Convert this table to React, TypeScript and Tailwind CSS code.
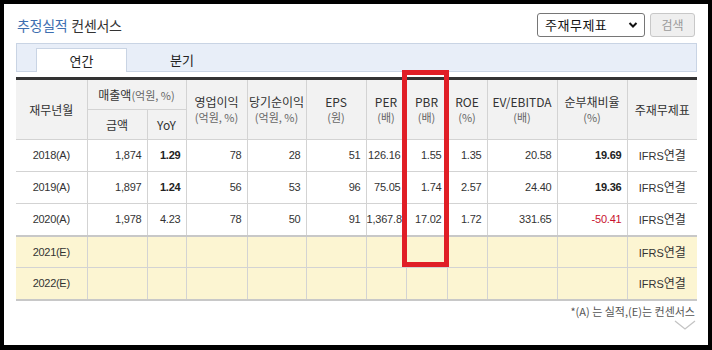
import React from "react";

const KR = { fontFamily: '"Noto Sans CJK KR", "Noto Sans", sans-serif' };
const NUM = { fontFamily: '"Liberation Sans", Arial, sans-serif' };

type Row = {
  y: string;
  vals: (string | null)[];
  est?: boolean;
};

const rows: Row[] = [
  { y: "2018(A)", vals: ["1,874", "1.29", "78", "28", "51", "126.16", "1.55", "1.35", "20.58", "19.69"] },
  { y: "2019(A)", vals: ["1,897", "1.24", "56", "53", "96", "75.05", "1.74", "2.57", "24.40", "19.36"] },
  { y: "2020(A)", vals: ["1,978", "4.23", "78", "50", "91", "1,367.8", "17.02", "1.72", "331.65", "-50.41"] },
  { y: "2021(E)", vals: [null, null, null, null, null, null, null, null, null, null], est: true },
  { y: "2022(E)", vals: [null, null, null, null, null, null, null, null, null, null], est: true },
];

const widths = [71, 60, 39, 61, 59, 60, 40, 41, 40, 70, 70, 70];

function Head2({ top, unit }: { top: string; unit: string }) {
  return (
    <th rowSpan={2} className="font-normal border-l border-b border-[#d3d3d3] leading-[15px] whitespace-nowrap text-[12px] text-[#333]">
      {top}
      <br />
      <span className="text-[11px] text-[#666]">{unit}</span>
    </th>
  );
}

export default function App() {
  return (
    <div className="relative w-[712px] h-[350px] bg-black pt-[4px] pl-[4px] pr-[4px] pb-[5px]">
      <div className="bg-white h-[341px] pl-[12px] pr-[11px] pt-[9px] text-[#333]" style={KR}>
        {/* title row */}
        <div className="flex items-center justify-between h-[24px]">
          <div className="text-[14px] leading-none pl-[1px] tracking-[-0.3px]">
            <span className="text-[#3d6eb0]">추정실적</span>
            <span className="text-[#333] ml-[4px]">컨센서스</span>
          </div>
          <div className="flex items-center gap-[5px] mr-[2px]">
            <div className="w-[108px] h-[24px] border border-[#767676] rounded-[3px] flex items-center justify-between pl-[7px] pr-[6px] text-[13px] text-[#111]">
              <span className="tracking-[0.5px]">주재무제표</span>
              <svg width="10" height="8" viewBox="0 0 10 8">
                <polyline points="1.5,2 5,5.5 8.5,2" fill="none" stroke="#111" strokeWidth="2" />
              </svg>
            </div>
            <div className="w-[45px] h-[24px] border border-[#c8c8c8] bg-[#efefef] rounded-[3px] flex items-center justify-center text-[12px] text-[#9a9a9a]">
              검색
            </div>
          </div>
        </div>
        {/* tabs */}
        <div className="mt-[6px] h-[29px] bg-[#e8eef8] border border-[#c9d4e4] pl-[19px] pt-[4px] flex">
          <div className="w-[91px] h-[24px] bg-white border border-b-0 border-[#c9d4e4] flex items-center justify-center text-[13px] text-[#222]">
            연간
          </div>
          <div className="w-[110px] h-[24px] flex items-center justify-center text-[13px] text-[#222]">
            분기
          </div>
        </div>
        {/* table */}
        <table className="mt-[5px] w-[681px] table-fixed border-collapse border-t-[3px] border-t-[#333]">
          <colgroup>
            {widths.map((w, i) => (
              <col key={i} style={{ width: w }} />
            ))}
          </colgroup>
          <thead>
            <tr className="h-[31px] bg-[#f2f2f2] text-[12px] font-normal">
              <th rowSpan={2} className="font-normal border-b border-[#d3d3d3] text-[#333]">재무년월</th>
              <th colSpan={2} className="font-normal border-l border-b border-[#d3d3d3] whitespace-nowrap text-[#333]">
                매출액<span className="text-[11px] text-[#666]">(억원, %)</span>
              </th>
              <Head2 top="영업이익" unit="(억원, %)" />
              <Head2 top="당기순이익" unit="(억원, %)" />
              <Head2 top="EPS" unit="(원)" />
              <Head2 top="PER" unit="(배)" />
              <Head2 top="PBR" unit="(배)" />
              <Head2 top="ROE" unit="(%)" />
              <Head2 top="EV/EBITDA" unit="(배)" />
              <Head2 top="순부채비율" unit="(%)" />
              <th rowSpan={2} className="font-normal border-l border-b border-[#d3d3d3] text-[#333]">주재무제표</th>
            </tr>
            <tr className="h-[30px] bg-[#f2f2f2] text-[12px]">
              <th className="font-normal border-l border-b border-[#d3d3d3] text-[#333]">금액</th>
              <th className="font-normal border-l border-b border-[#d3d3d3] text-[12px] text-[#333]">YoY</th>
            </tr>
          </thead>
          <tbody>
            {rows.map((r, ri) => (
              <tr
                key={r.y}
                className={
                  "h-[32px] " +
                  (r.est ? "bg-[#fcf5d2] " : "bg-white ") +
                  (ri === 2 || ri === 4 ? "border-b-2 border-b-[#c8c8c8] " : "border-b border-b-[#d3d3d3] ")
                }
              >
                <td className="text-center text-[11px] tracking-[-0.3px] text-[#333]" style={NUM}>
                  {r.y}
                </td>
                {r.vals.map((v, i) => {
                  const bold = (i === 1 && ri < 2) || (i === 9 && ri < 2);
                  const red = v !== null && v.startsWith("-");
                  return (
                    <td key={i} className="border-l border-[#d3d3d3] p-0">
                      <div
                        className={
                          "overflow-hidden whitespace-nowrap text-right pr-[5px] text-[11px] tracking-[-0.2px] " +
                          (bold ? "font-bold text-[#222] " : "text-[#333] ") +
                          (red ? "text-[#c8102e]" : "")
                        }
                        style={NUM}
                      >
                        {v ?? "\u00a0"}
                      </div>
                    </td>
                  );
                })}
                <td className="border-l border-[#d3d3d3] text-center text-[12px] text-[#333] whitespace-nowrap">
                  <span style={NUM} className="text-[11px]">IFRS</span>연결
                </td>
              </tr>
            ))}
          </tbody>
        </table>
        <div className="mt-[3px] pr-[2px] text-right text-[11px] text-[#555] leading-[14px]">
          *(A) 는 실적,(E)는 컨센서스
        </div>
        <div className="flex justify-end pr-[1px] mt-[2px]">
          <svg width="22" height="10" viewBox="0 0 22 10">
            <polyline points="1,1 11,9 21,1" fill="none" stroke="#c4c4c4" strokeWidth="1.3" />
          </svg>
        </div>
      </div>
      {/* red highlight box */}
      <div className="absolute left-[402px] top-[70px] w-[47px] h-[197px] border-[5px] border-[#e01e26]" />
    </div>
  );
}
